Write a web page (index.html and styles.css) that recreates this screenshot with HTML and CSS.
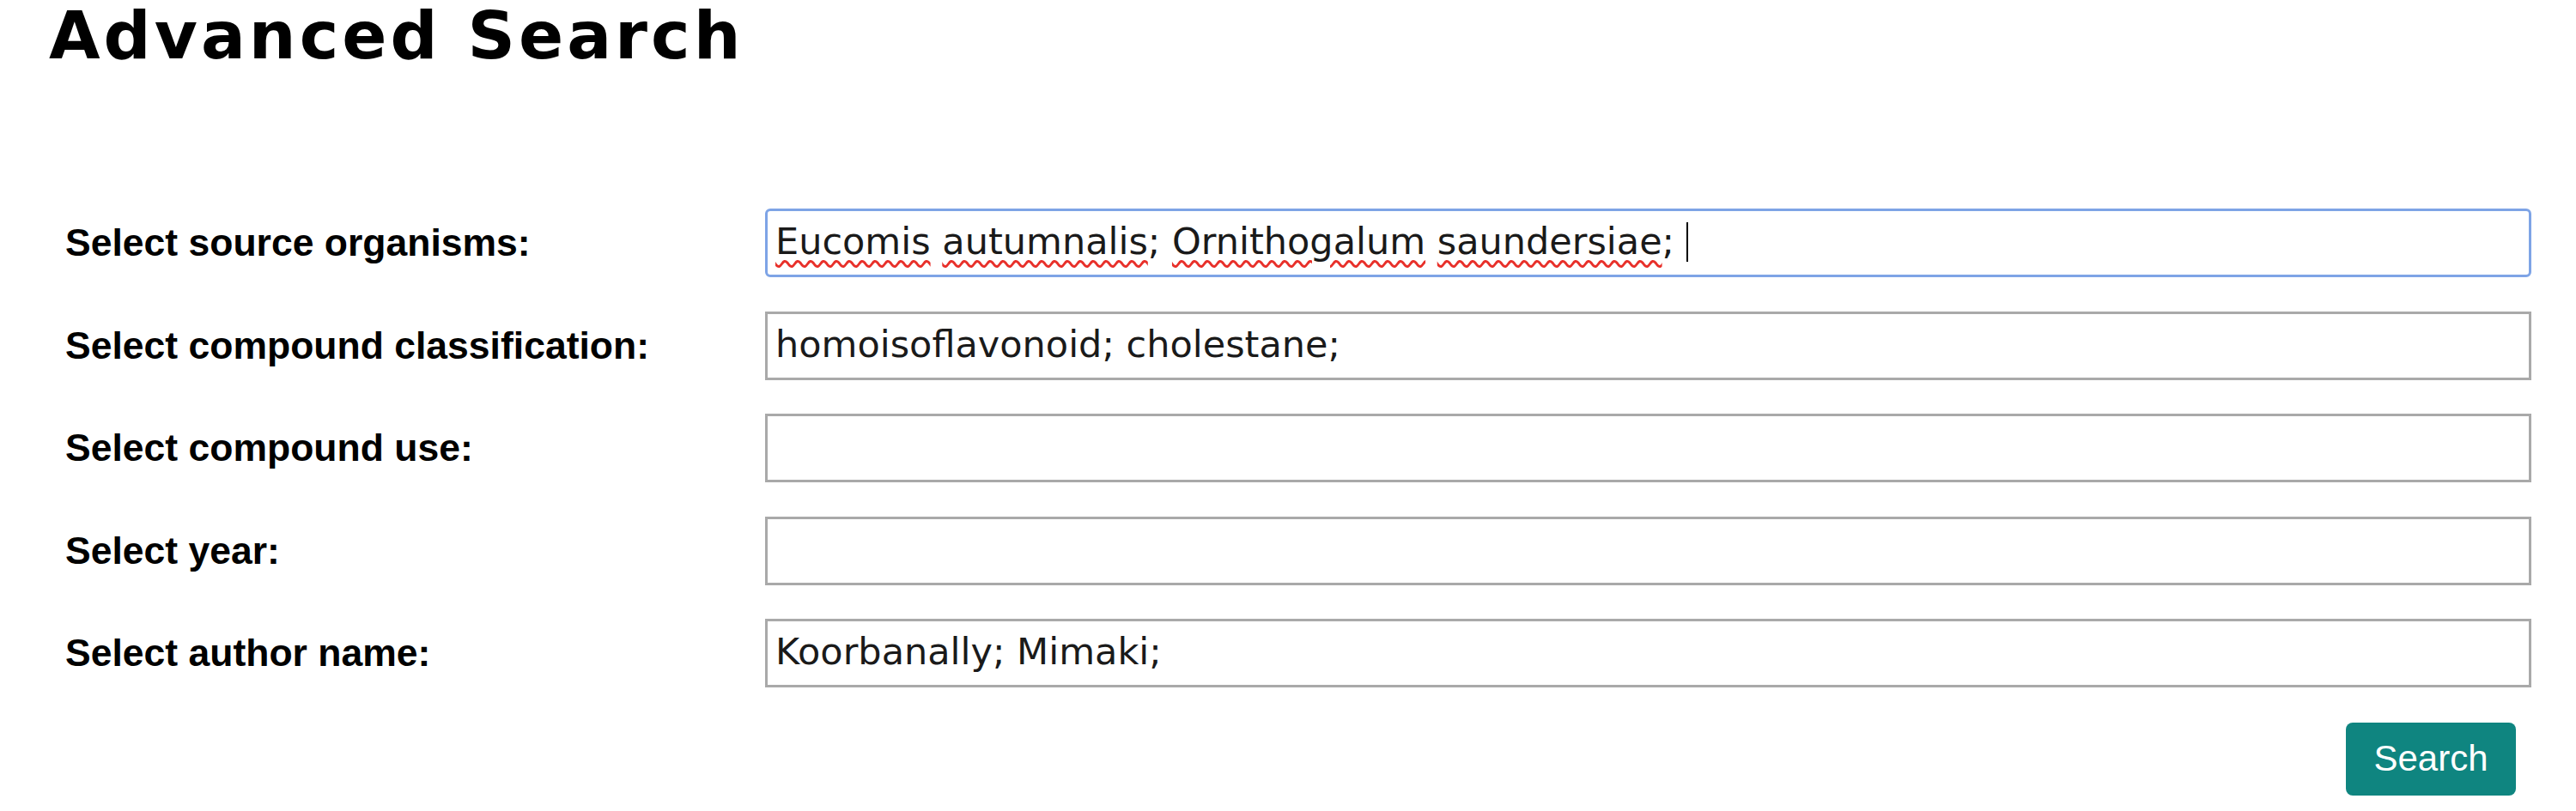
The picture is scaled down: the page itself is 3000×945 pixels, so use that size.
FILE: index.html
```html
<!DOCTYPE html>
<html lang="en">
<head>
    <meta charset="UTF-8">
    <meta name="viewport" content="width=device-width, initial-scale=1.0">
    <title>Advanced Search</title>
    <link rel="stylesheet" href="styles.css">
</head>
<body>
    <div class="page">
        <h1 class="title">Advanced Search</h1>

        <!-- Search form: one row per filter -->
        <form class="search-form">
            <div class="row">
                <label class="label">Select source organisms:</label>
                <div class="field focused"><span class="typo">Eucomis</span> <span class="typo">autumnalis</span>; <span class="typo">Ornithogalum</span> <span class="typo">saundersiae</span>; <span class="caret"></span></div>
            </div>
            <div class="row">
                <label class="label">Select compound classification:</label>
                <div class="field">homoisoflavonoid; cholestane;</div>
            </div>
            <div class="row">
                <label class="label">Select compound use:</label>
                <div class="field"></div>
            </div>
            <div class="row">
                <label class="label">Select year:</label>
                <div class="field"></div>
            </div>
            <div class="row">
                <label class="label">Select author name:</label>
                <div class="field">Koorbanally; Mimaki;</div>
            </div>
            <div class="actions">
                <button type="button" class="search-btn">Search</button>
            </div>
        </form>
    </div>
</body>
</html>
```

FILE: styles.css
```css
/* Advanced search page */
body {
    margin: 0;
    background: #fff;
    color: #000;
}
.page {
    padding: 3px 52px 0 57px;
}
.title {
    margin: 0;
    font-family: "DejaVu Sans", Verdana, sans-serif;
    font-weight: bold;
    font-size: 77px;
    line-height: 1;
    letter-spacing: 4px;
}
.search-form {
    margin-top: 163px;
    padding-left: 19px;
    display: flex;
    flex-direction: column;
    gap: 39.5px;
}
.row {
    display: grid;
    grid-template-columns: 815px 1fr;
    align-items: center;
}
.label {
    font-family: "Liberation Sans", Arial, sans-serif;
    font-weight: bold;
    font-size: 44.5px;
}
.field {
    box-sizing: border-box;
    height: 80px;
    padding: 0 9px;
    border: 3px solid #a9a9a9;
    font-family: "DejaVu Sans", Verdana, sans-serif;
    font-size: 43px;
    line-height: 71px;
    color: #1a1a1a;
    white-space: pre;
    overflow: hidden;
}
.field.focused {
    border-color: #7ea4e6;
    border-radius: 6px;
}
.typo {
    text-decoration: underline wavy #e8302a;
    text-decoration-thickness: 3px;
    text-underline-offset: 7px;
}
.caret {
    display: inline-block;
    width: 2px;
    height: 46px;
    background: #000;
    vertical-align: -9px;
}
.actions {
    display: flex;
    justify-content: flex-end;
    padding-right: 18px;
    margin-top: 1px;
}
.search-btn {
    width: 198px;
    height: 85px;
    border: none;
    border-radius: 8px;
    background: #0f8580;
    color: #fff;
    font-family: "Liberation Sans", Arial, sans-serif;
    font-size: 42px;
    cursor: pointer;
}
```
